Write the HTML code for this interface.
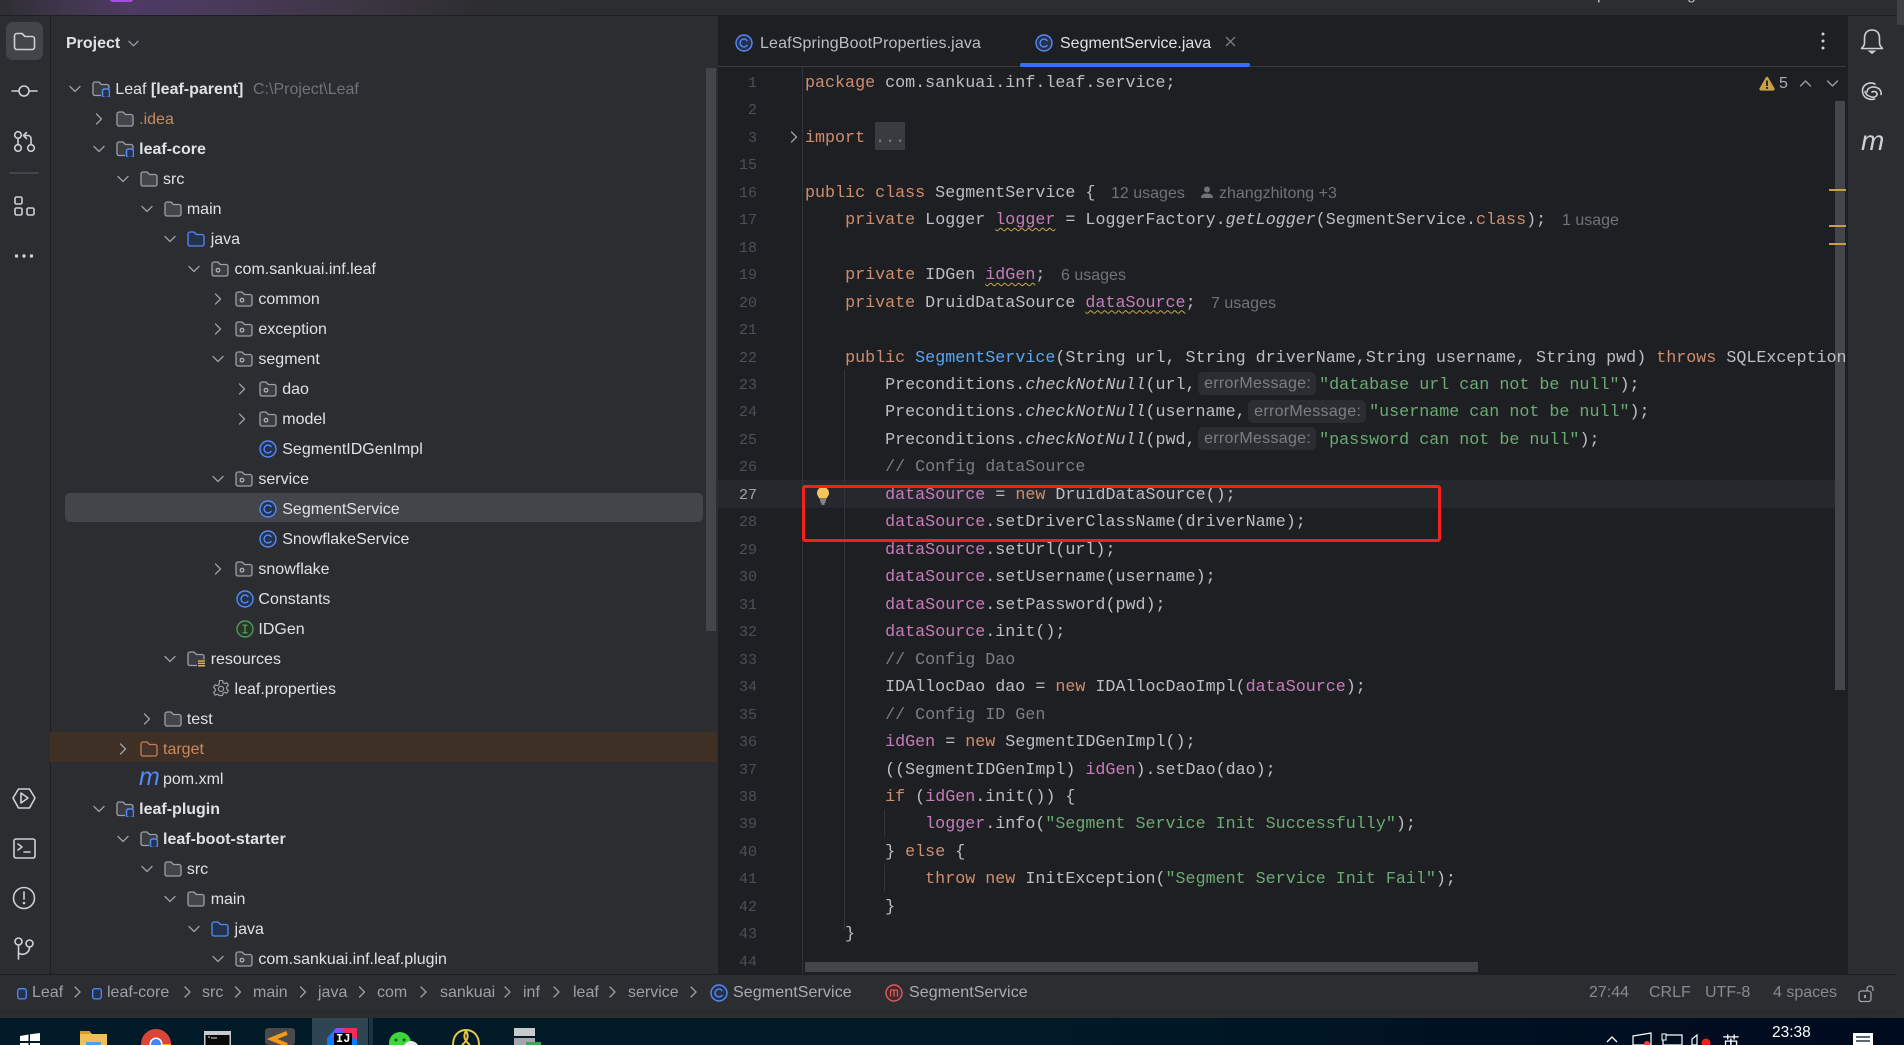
<!DOCTYPE html>
<html><head><meta charset="utf-8"><title>Leaf</title>
<style>
*{box-sizing:border-box}
html,body{margin:0;padding:0;width:1904px;height:1045px;overflow:hidden;background:#2b2d30}
body{position:relative;font-family:"Liberation Sans","Noto Sans CJK SC",sans-serif;font-size:16px;color:#dfe1e5}
.a{position:absolute}
svg{position:absolute;overflow:visible}
.r{position:absolute;left:0;right:0;height:30px;line-height:30px;top:calc(73.5px + 30px*var(--i));white-space:pre}
.r .ch{left:calc(69px + 23.85px*var(--n));top:9px;width:12px;height:12px}
.r .ic{left:calc(92px + 23.85px*var(--n));top:7px;width:18px;height:16px}
.r .ic.cl{top:6px;height:18px;left:calc(92.5px + 23.85px*var(--n))}
.r .t{position:absolute;left:calc(115.3px + 23.85px*var(--n));top:1px}
.g{fill:none;stroke:#9da0a8;stroke-width:1.3;stroke-linecap:round;stroke-linejoin:round}
.tb{fill:none;stroke:#ced0d6;stroke-width:1.6;stroke-linecap:round;stroke-linejoin:round}
.l{position:absolute;left:718px;width:1130px;height:27.45px;line-height:27.45px;top:calc(69.8px + 27.47px*var(--r));white-space:pre;font-family:"Liberation Mono",monospace;font-size:16.7px;color:#bcbec4;overflow:hidden}
.l .n{position:absolute;right:1091px;top:0;font-size:15px;color:#4b5059}
.l .c{position:absolute;left:87px;top:0}
.l .h{position:absolute;top:0;font-family:"Liberation Sans",sans-serif;font-size:16px;color:#6f737a}
k{color:#cf8e6d}f{color:#c77dbb}m{color:#56a8f5}s{color:#6aab73;text-decoration:none}em{font-style:italic}
c{color:#7a7e85}
u{color:#c77dbb;text-decoration:underline wavy #c9a54a 1px;text-underline-offset:3px}
.hb{display:inline-block;vertical-align:top;height:23px;line-height:24px;margin:.5px 3px 0 2.5px;width:118px;background:#2b2d30;border-radius:5px;font-family:"Liberation Sans",sans-serif;font-size:16px;color:#7a7e85;padding-left:6px;letter-spacing:.3px}
.cr{position:absolute;top:980px;line-height:26px;color:#9da0a8;white-space:pre}
.st{position:absolute;top:980px;line-height:26px;color:#868a91;white-space:pre}
</style></head><body>
<svg width="0" height="0" style="position:absolute">
<defs>
<symbol id="d" viewBox="0 0 12 12"><path class="g" d="M1 3.5 6 8.5 11 3.5"/></symbol>
<symbol id="rt" viewBox="0 0 12 12"><path class="g" d="M3.5 1 8.5 6 3.5 11"/></symbol>
<symbol id="fo" viewBox="0 0 18 16"><path d="M1 3a2 2 0 0 1 2-2h4l2.5 2.5H15a2 2 0 0 1 2 2V13a2 2 0 0 1-2 2H3a2 2 0 0 1-2-2z" fill="#43454a" stroke="#9da0a8" stroke-width="1.3"/></symbol>
<symbol id="pk" viewBox="0 0 18 16"><path d="M1 3a2 2 0 0 1 2-2h4l2.5 2.5H15a2 2 0 0 1 2 2V13a2 2 0 0 1-2 2H3a2 2 0 0 1-2-2z" fill="#3a3c40" stroke="#9da0a8" stroke-width="1.3"/><circle cx="7" cy="9.2" r="1.8" fill="none" stroke="#b4b8bf" stroke-width="1.2"/></symbol>
<symbol id="jf" viewBox="0 0 18 16"><path d="M1 3a2 2 0 0 1 2-2h4l2.5 2.5H15a2 2 0 0 1 2 2V13a2 2 0 0 1-2 2H3a2 2 0 0 1-2-2z" fill="#25324d" stroke="#548af7" stroke-width="1.3"/></symbol>
<symbol id="tg" viewBox="0 0 18 16"><path d="M1 3a2 2 0 0 1 2-2h4l2.5 2.5H15a2 2 0 0 1 2 2V13a2 2 0 0 1-2 2H3a2 2 0 0 1-2-2z" fill="#45322a" stroke="#c77d55" stroke-width="1.3"/></symbol>
<symbol id="mo" viewBox="0 0 18 16"><path d="M9 14.5H3a2 2 0 0 1-2-2V3a2 2 0 0 1 2-2h4l2.5 2.5H15a2 2 0 0 1 2 2v2" fill="#3a3c40" stroke="#9da0a8" stroke-width="1.3"/><rect x="10.5" y="8" width="7" height="8.5" rx="2" fill="#25324d" stroke="#548af7" stroke-width="1.5"/></symbol>
<symbol id="re" viewBox="0 0 18 16"><path d="M10 14.5H3a2 2 0 0 1-2-2V3a2 2 0 0 1 2-2h4l2.5 2.5H15a2 2 0 0 1 2 2v3" fill="#3a3c40" stroke="#9da0a8" stroke-width="1.3"/><path d="M11 10h8M11 12.4h8M11 14.8h8" stroke="#d6ae58" stroke-width="1.5"/></symbol>
<symbol id="cl" viewBox="0 0 18 18"><circle cx="9" cy="9" r="8" fill="#25324d" stroke="#548af7" stroke-width="1.4"/><path d="M12 6.6A3.9 3.9 0 1 0 12 11.4" fill="none" stroke="#548af7" stroke-width="1.4" stroke-linecap="round"/></symbol>
<symbol id="if" viewBox="0 0 18 18"><circle cx="9" cy="9" r="8" fill="#253627" stroke="#57965c" stroke-width="1.4"/><path d="M6.5 5.2h5M6.5 12.8h5M9 5.2v7.6" fill="none" stroke="#57965c" stroke-width="1.4"/></symbol>
<symbol id="gear" viewBox="0 0 18 18"><path d="M7.5 1h3l.5 2.3 1.7.9 2.2-.8 1.5 2.6-1.7 1.6v1.9l1.7 1.6-1.5 2.6-2.2-.8-1.7.9-.5 2.3h-3L7 15.8l-1.7-.9-2.2.8-1.5-2.6 1.7-1.6V9.6L1.6 8 3.1 5.4l2.2.8L7 5.3z" fill="none" stroke="#9da0a8" stroke-width="1.2" stroke-linejoin="round" transform="translate(0 -.6)"/><circle cx="9" cy="8.9" r="2.6" fill="none" stroke="#9da0a8" stroke-width="1.2"/></symbol>
</defs></svg>

<!-- title bar -->
<div class="a" style="left:0;top:0;width:1904px;height:16px;background:linear-gradient(90deg,#2e2e33 0,#41364f 70px,#4e3a63 130px,#4a3b5e 200px,#3e3645 340px,#2e2e32 470px,#2b2d30 600px);border-bottom:1.5px solid #1e1f22"></div>
<div class="a" style="left:110px;top:-3px;width:23px;height:5px;border-radius:3px;background:#a64fe0"></div>
<div class="a" style="left:1597px;top:-14px;color:#bcbec4">p</div><div class="a" style="left:1650px;top:-15px;color:#bcbec4">,</div><div class="a" style="left:1687px;top:-14px;color:#bcbec4">g</div>
<div class="a" style="left:1897px;top:0;width:7px;height:25px;background:#3f4144"></div>

<!-- left toolbar -->
<div class="a" style="left:50px;top:16px;width:1px;height:958px;background:#1e1f22"></div>
<div class="a" style="left:5.5px;top:22px;width:37.5px;height:38px;border-radius:7px;background:#43454a"></div>
<svg style="left:0;top:0" width="50" height="1045">
<path class="tb" d="M14.5 36a2.5 2.5 0 0 1 2.5-2.500h5l3 3h7a2.500 2.500 0 0 1 2.500 2.500v8a2.500 2.500 0 0 1-2.500 2.500H17a2.500 2.500 0 0 1-2.500-2.500z" stroke="#dfe1e5"/>
<path class="tb" d="M12 91h6.500M29.500 91H37"/><circle class="tb" cx="24" cy="91" r="5"/>
<circle class="tb" cx="18" cy="135" r="3.300"/><circle class="tb" cx="18" cy="148" r="3.300"/><circle class="tb" cx="31" cy="148" r="3.300"/>
<path class="tb" d="M18 138.500v6M31 144.500v-6a3 3 0 0 0-3-3h-4M26.500 132.500l-3 3 3 3"/>
<rect x="9" y="172" width="30" height="2" fill="#43454a"/>
<rect class="tb" x="15" y="197" width="7" height="7" rx="1.500"/><rect class="tb" x="15" y="208" width="7" height="7" rx="1.500"/><rect class="tb" x="27" y="208" width="7" height="7" rx="1.500"/>
<g fill="#ced0d6"><circle cx="16.500" cy="256" r="1.700"/><circle cx="24" cy="256" r="1.700"/><circle cx="31.500" cy="256" r="1.700"/></g>
<path class="tb" d="M18.500 789h11l5.500 9-5.500 10h-11l-5.500-10zM21 793l7 5-7 5z"/>
<rect class="tb" x="14" y="839" width="21" height="19" rx="2"/><path class="tb" d="M18 844l4 3-4 3M24 852h6"/>
<circle class="tb" cx="24" cy="898" r="10.500"/><path class="tb" d="M24 892v7" stroke-width="2"/><circle cx="24" cy="903" r="1.300" fill="#ced0d6"/>
<circle class="tb" cx="18.500" cy="941.500" r="3.500"/><circle class="tb" cx="29.500" cy="943.500" r="3.500"/><path class="tb" d="M18.500 945v14M29.500 947a7 7 0 0 1-11 6"/>
</svg>

<!-- project panel -->
<div class="a" style="left:66px;top:31px;line-height:26px;font-weight:bold;color:#dfe1e5">Project</div>
<svg style="left:128px;top:38px" width="11" height="11"><use href="#d" width="11" height="11"/></svg>
<div class="a" style="left:65px;top:493px;width:638px;height:29px;border-radius:5px;background:#43454a"></div>
<div class="a" style="left:50px;top:732px;width:667px;height:30px;background:#3f3026"></div>
<div class="a" style="left:706px;top:68px;width:10px;height:563px;background:#43454a"></div>

<div class="a" style="left:0;top:0;width:717px;height:974px;overflow:hidden">
<div class="r" style="--i:0;--n:0"><svg class="ch"><use href="#d" width="12" height="12"/></svg><svg class="ic"><use href="#mo" width="18" height="16"/></svg><span class="t">Leaf <b>[leaf-parent]</b></span><span class="a" style="left:253px;top:1px;color:#6f737a">C:\Project\Leaf</span></div>
<div class="r" style="--i:1;--n:1"><svg class="ch"><use href="#rt" width="12" height="12"/></svg><svg class="ic"><use href="#fo" width="18" height="16"/></svg><span class="t" style="color:#c98a5e">.idea</span></div>
<div class="r" style="--i:2;--n:1"><svg class="ch"><use href="#d" width="12" height="12"/></svg><svg class="ic"><use href="#mo" width="18" height="16"/></svg><span class="t"><b>leaf-core</b></span></div>
<div class="r" style="--i:3;--n:2"><svg class="ch"><use href="#d" width="12" height="12"/></svg><svg class="ic"><use href="#fo" width="18" height="16"/></svg><span class="t">src</span></div>
<div class="r" style="--i:4;--n:3"><svg class="ch"><use href="#d" width="12" height="12"/></svg><svg class="ic"><use href="#fo" width="18" height="16"/></svg><span class="t">main</span></div>
<div class="r" style="--i:5;--n:4"><svg class="ch"><use href="#d" width="12" height="12"/></svg><svg class="ic"><use href="#jf" width="18" height="16"/></svg><span class="t">java</span></div>
<div class="r" style="--i:6;--n:5"><svg class="ch"><use href="#d" width="12" height="12"/></svg><svg class="ic"><use href="#pk" width="18" height="16"/></svg><span class="t">com.sankuai.inf.leaf</span></div>
<div class="r" style="--i:7;--n:6"><svg class="ch"><use href="#rt" width="12" height="12"/></svg><svg class="ic"><use href="#pk" width="18" height="16"/></svg><span class="t">common</span></div>
<div class="r" style="--i:8;--n:6"><svg class="ch"><use href="#rt" width="12" height="12"/></svg><svg class="ic"><use href="#pk" width="18" height="16"/></svg><span class="t">exception</span></div>
<div class="r" style="--i:9;--n:6"><svg class="ch"><use href="#d" width="12" height="12"/></svg><svg class="ic"><use href="#pk" width="18" height="16"/></svg><span class="t">segment</span></div>
<div class="r" style="--i:10;--n:7"><svg class="ch"><use href="#rt" width="12" height="12"/></svg><svg class="ic"><use href="#pk" width="18" height="16"/></svg><span class="t">dao</span></div>
<div class="r" style="--i:11;--n:7"><svg class="ch"><use href="#rt" width="12" height="12"/></svg><svg class="ic"><use href="#pk" width="18" height="16"/></svg><span class="t">model</span></div>
<div class="r" style="--i:12;--n:7"><svg class="ic cl"><use href="#cl" width="18" height="18"/></svg><span class="t">SegmentIDGenImpl</span></div>
<div class="r" style="--i:13;--n:6"><svg class="ch"><use href="#d" width="12" height="12"/></svg><svg class="ic"><use href="#pk" width="18" height="16"/></svg><span class="t">service</span></div>
<div class="r" style="--i:14;--n:7"><svg class="ic cl"><use href="#cl" width="18" height="18"/></svg><span class="t">SegmentService</span></div>
<div class="r" style="--i:15;--n:7"><svg class="ic cl"><use href="#cl" width="18" height="18"/></svg><span class="t">SnowflakeService</span></div>
<div class="r" style="--i:16;--n:6"><svg class="ch"><use href="#rt" width="12" height="12"/></svg><svg class="ic"><use href="#pk" width="18" height="16"/></svg><span class="t">snowflake</span></div>
<div class="r" style="--i:17;--n:6"><svg class="ic cl"><use href="#cl" width="18" height="18"/></svg><span class="t">Constants</span></div>
<div class="r" style="--i:18;--n:6"><svg class="ic cl"><use href="#if" width="18" height="18"/></svg><span class="t">IDGen</span></div>
<div class="r" style="--i:19;--n:4"><svg class="ch"><use href="#d" width="12" height="12"/></svg><svg class="ic"><use href="#re" width="18" height="16"/></svg><span class="t">resources</span></div>
<div class="r" style="--i:20;--n:5"><svg class="ic cl"><use href="#gear" width="18" height="18"/></svg><span class="t">leaf.properties</span></div>
<div class="r" style="--i:21;--n:3"><svg class="ch"><use href="#rt" width="12" height="12"/></svg><svg class="ic"><use href="#fo" width="18" height="16"/></svg><span class="t">test</span></div>
<div class="r" style="--i:22;--n:2"><svg class="ch"><use href="#rt" width="12" height="12"/></svg><svg class="ic"><use href="#tg" width="18" height="16"/></svg><span class="t" style="color:#c98a5e">target</span></div>
<div class="r" style="--i:23;--n:2"><span class="a" style="left:139px;top:-2px;font-style:italic;font-size:25px;color:#548af7">m</span><span class="t">pom.xml</span></div>
<div class="r" style="--i:24;--n:1"><svg class="ch"><use href="#d" width="12" height="12"/></svg><svg class="ic"><use href="#mo" width="18" height="16"/></svg><span class="t"><b>leaf-plugin</b></span></div>
<div class="r" style="--i:25;--n:2"><svg class="ch"><use href="#d" width="12" height="12"/></svg><svg class="ic"><use href="#mo" width="18" height="16"/></svg><span class="t"><b>leaf-boot-starter</b></span></div>
<div class="r" style="--i:26;--n:3"><svg class="ch"><use href="#d" width="12" height="12"/></svg><svg class="ic"><use href="#fo" width="18" height="16"/></svg><span class="t">src</span></div>
<div class="r" style="--i:27;--n:4"><svg class="ch"><use href="#d" width="12" height="12"/></svg><svg class="ic"><use href="#fo" width="18" height="16"/></svg><span class="t">main</span></div>
<div class="r" style="--i:28;--n:5"><svg class="ch"><use href="#d" width="12" height="12"/></svg><svg class="ic"><use href="#jf" width="18" height="16"/></svg><span class="t">java</span></div>
<div class="r" style="--i:29;--n:6"><svg class="ch"><use href="#d" width="12" height="12"/></svg><svg class="ic"><use href="#pk" width="18" height="16"/></svg><span class="t">com.sankuai.inf.leaf.plugin</span></div>
</div>

<!-- editor -->
<div class="a" style="left:718px;top:16px;width:1130px;height:958px;background:#1e1f22"></div>
<div class="a" style="left:718px;top:66px;width:1128px;height:1px;background:#393b40"></div>
<svg style="left:735px;top:34px" width="18" height="18"><use href="#cl" width="18" height="18"/></svg>
<div class="a" style="left:760px;top:31px;line-height:26px;color:#bcbec4;letter-spacing:.14px">LeafSpringBootProperties.java</div>
<svg style="left:1035px;top:34px" width="18" height="18"><use href="#cl" width="18" height="18"/></svg>
<div class="a" style="left:1060px;top:31px;line-height:26px;color:#dfe1e5">SegmentService.java</div>
<svg style="left:1225px;top:36px" width="11" height="11"><path d="M1 1l9 9M10 1l-9 9" stroke="#7a7e85" stroke-width="1.300" fill="none"/></svg>
<div class="a" style="left:1020px;top:63px;width:230px;height:4px;border-radius:2px;background:#3574f0"></div>
<svg style="left:1818px;top:32px" width="10" height="20"><g fill="#ced0d6"><circle cx="5" cy="2" r="1.500"/><circle cx="5" cy="9" r="1.500"/><circle cx="5" cy="16" r="1.500"/></g></svg>

<!-- current line + guides -->
<div class="a" style="left:718px;top:480px;width:1117px;height:27.500px;background:#26282e"></div>
<div class="a" style="left:802px;top:67px;width:1px;height:907px;background:#313438"></div>
<div class="a" style="left:844px;top:370px;width:1px;height:560px;background:#313438"></div>
<div class="a" style="left:884px;top:810px;width:1px;height:27px;background:#313438"></div>
<div class="a" style="left:884px;top:865px;width:1px;height:27px;background:#313438"></div>
<div class="a" style="left:875px;top:122px;width:30px;height:28px;background:#393b40"></div>
<svg style="left:790px;top:131px" width="8" height="12"><path class="g" d="M1.500 1l5 5-5 5" stroke="#7a7e85"/></svg>
<div class="a" style="left:1835px;top:101px;width:10px;height:589px;background:#43454a"></div>

<div class="l" style="--r:0"><span class="n">1</span><span class="c"><k>package</k> com.sankuai.inf.leaf.service;</span></div>
<div class="l" style="--r:1"><span class="n">2</span></div>
<div class="l" style="--r:2"><span class="n">3</span><span class="c"><k>import</k> <c>...</c></span></div>
<div class="l" style="--r:3"><span class="n">15</span></div>
<div class="l" style="--r:4"><span class="n">16</span><span class="c"><k>public class</k> SegmentService {</span><span class="h" style="left:393px">12 usages</span><span class="h" style="left:501px">zhangzhitong +3</span></div>
<div class="l" style="--r:5"><span class="n">17</span><span class="c">    <k>private</k> Logger <u>logger</u> = LoggerFactory.<em>getLogger</em>(SegmentService.<k>class</k>);</span><span class="h" style="left:844px">1 usage</span></div>
<div class="l" style="--r:6"><span class="n">18</span></div>
<div class="l" style="--r:7"><span class="n">19</span><span class="c">    <k>private</k> IDGen <u>idGen</u>;</span><span class="h" style="left:343px">6 usages</span></div>
<div class="l" style="--r:8"><span class="n">20</span><span class="c">    <k>private</k> DruidDataSource <u>dataSource</u>;</span><span class="h" style="left:493px">7 usages</span></div>
<div class="l" style="--r:9"><span class="n">21</span></div>
<div class="l" style="--r:10"><span class="n">22</span><span class="c">    <k>public</k> <m>SegmentService</m>(String url, String driverName,String username, String pwd) <k>throws</k> SQLException</span></div>
<div class="l" style="--r:11"><span class="n">23</span><span class="c">        Preconditions.<em>checkNotNull</em>(url,<span class="hb">errorMessage:</span><s>"database url can not be null"</s>);</span></div>
<div class="l" style="--r:12"><span class="n">24</span><span class="c">        Preconditions.<em>checkNotNull</em>(username,<span class="hb">errorMessage:</span><s>"username can not be null"</s>);</span></div>
<div class="l" style="--r:13"><span class="n">25</span><span class="c">        Preconditions.<em>checkNotNull</em>(pwd,<span class="hb">errorMessage:</span><s>"password can not be null"</s>);</span></div>
<div class="l" style="--r:14"><span class="n">26</span><span class="c"><c>        // Config dataSource</c></span></div>
<div class="l" style="--r:15"><span class="n" style="color:#a1a3ab">27</span><span class="c">        <f>dataSource</f> = <k>new</k> DruidDataSource();</span></div>
<div class="l" style="--r:16"><span class="n">28</span><span class="c">        <f>dataSource</f>.setDriverClassName(driverName);</span></div>
<div class="l" style="--r:17"><span class="n">29</span><span class="c">        <f>dataSource</f>.setUrl(url);</span></div>
<div class="l" style="--r:18"><span class="n">30</span><span class="c">        <f>dataSource</f>.setUsername(username);</span></div>
<div class="l" style="--r:19"><span class="n">31</span><span class="c">        <f>dataSource</f>.setPassword(pwd);</span></div>
<div class="l" style="--r:20"><span class="n">32</span><span class="c">        <f>dataSource</f>.init();</span></div>
<div class="l" style="--r:21"><span class="n">33</span><span class="c"><c>        // Config Dao</c></span></div>
<div class="l" style="--r:22"><span class="n">34</span><span class="c">        IDAllocDao dao = <k>new</k> IDAllocDaoImpl(<f>dataSource</f>);</span></div>
<div class="l" style="--r:23"><span class="n">35</span><span class="c"><c>        // Config ID Gen</c></span></div>
<div class="l" style="--r:24"><span class="n">36</span><span class="c">        <f>idGen</f> = <k>new</k> SegmentIDGenImpl();</span></div>
<div class="l" style="--r:25"><span class="n">37</span><span class="c">        ((SegmentIDGenImpl) <f>idGen</f>).setDao(dao);</span></div>
<div class="l" style="--r:26"><span class="n">38</span><span class="c">        <k>if</k> (<f>idGen</f>.init()) {</span></div>
<div class="l" style="--r:27"><span class="n">39</span><span class="c">            <f>logger</f>.info(<s>"Segment Service Init Successfully"</s>);</span></div>
<div class="l" style="--r:28"><span class="n">40</span><span class="c">        } <k>else</k> {</span></div>
<div class="l" style="--r:29"><span class="n">41</span><span class="c">            <k>throw new</k> InitException(<s>"Segment Service Init Fail"</s>);</span></div>
<div class="l" style="--r:30"><span class="n">42</span><span class="c">        }</span></div>
<div class="l" style="--r:31"><span class="n">43</span><span class="c">    }</span></div>
<div class="l" style="--r:32"><span class="n">44</span></div>

<svg style="left:1201px;top:186px" width="12" height="13"><circle cx="6" cy="3.500" r="3" fill="#6f737a"/><path d="M0 12c0-3.500 2.500-4.500 6-4.500s6 1 6 4.500z" fill="#6f737a"/></svg>
<svg style="left:816px;top:487px" width="14" height="18"><path d="M7 0a6 6 0 0 0-6 6c0 2.500 1.500 3.500 2.300 5.500h7.400C11.500 9.500 13 8.500 13 6a6 6 0 0 0-6-6z" fill="#f2c55c"/><path d="M4 13h6M4.500 15h5M5.500 17h3" stroke="#bcbec4" stroke-width="1.200"/></svg>
<div class="a" style="left:802px;top:484.500px;width:639px;height:57px;border:3.500px solid #f5201a;border-radius:3px"></div>

<!-- inspection + scroll -->
<svg style="left:1759px;top:76px" width="16" height="15"><path d="M8 .800a1.500 1.500 0 0 1 1.300.8l6.200 10.800a1.500 1.500 0 0 1-1.300 2.200H1.800a1.500 1.500 0 0 1-1.300-2.200L6.700 1.600A1.500 1.500 0 0 1 8 .800z" fill="#c9a044"/><rect x="7.100" y="4.500" width="1.800" height="5.500" fill="#1e1f22"/><rect x="7.100" y="11" width="1.800" height="1.900" fill="#1e1f22"/></svg>
<div class="a" style="left:1779px;top:71px;line-height:26px;color:#a8adb5">5</div>
<svg style="left:1800px;top:80px" width="11" height="7"><path class="g" d="M.500 6 5.500 1l5 5"/></svg>
<svg style="left:1827px;top:80px" width="11" height="7"><path class="g" d="M.500 1l5 5 5-5"/></svg>
<div class="a" style="left:1829px;top:189px;width:17px;height:2px;background:#c9a044"></div>
<div class="a" style="left:1829px;top:225px;width:17px;height:2px;background:#c9a044"></div>
<div class="a" style="left:1829px;top:243px;width:17px;height:2px;background:#c9a044"></div>
<div class="a" style="left:805px;top:962px;width:673px;height:10px;background:#43454a"></div>

<!-- right toolbar -->
<svg style="left:1848px;top:15px" width="50" height="150">
<path class="tb" d="M24 15c-5 0-7.500 3.500-7.500 8v5c0 2-1.500 4-3 5.500h21c-1.500-1.500-3-3.500-3-5.500v-5c0-4.500-2.500-8-7.500-8z"/><path d="M21 36h6l-3 2.500z" fill="#ced0d6" stroke="#ced0d6"/>
<path class="tb" d="M27 69c-6-3-13 1-12.500 7.500.4 6 6.500 9 12 7.500M19 77c0-4 5-6 9.500-4.500 3.500 1.200 5 4 4.500 7M24 77c2-1 4.500-.5 5 1.500s-2 4.500-5.500 3.500-6-3-6.500-5.500"/>
</svg>
<div class="a" style="left:1861px;top:123px;font-style:italic;font-size:28px;line-height:36px;color:#ced0d6">m</div>

<!-- status bar -->
<div class="a" style="left:0;top:974px;width:1897px;height:1px;background:#1e1f22"></div>
<div class="a" style="left:0;top:1011px;width:1897px;height:1px;background:#26282b"></div>
<svg style="left:17px;top:988px" width="90" height="11"><rect x=".700" y=".700" width="8.600" height="10.200" rx="2.200" fill="#25324d" stroke="#548af7" stroke-width="1.300"/><rect x="75.700" y=".700" width="8.600" height="10.200" rx="2.200" fill="#25324d" stroke="#548af7" stroke-width="1.300"/></svg>
<div class="cr" style="left:32px">Leaf</div>
<div class="cr" style="left:107px">leaf-core</div>
<div class="cr" style="left:202px">src</div>
<div class="cr" style="left:253px">main</div>
<div class="cr" style="left:318px">java</div>
<div class="cr" style="left:377px">com</div>
<div class="cr" style="left:440px">sankuai</div>
<div class="cr" style="left:523px">inf</div>
<div class="cr" style="left:573px">leaf</div>
<div class="cr" style="left:628px">service</div>
<svg style="left:0;top:986px" width="720" height="14"><g class="g" stroke="#868a91"><path d="M75 1l5 5-5 5M185 1l5 5-5 5M235.500 1l5 5-5 5M300.500 1l5 5-5 5M359.500 1l5 5-5 5M421 1l5 5-5 5M505 1l5 5-5 5M554 1l5 5-5 5M610 1l5 5-5 5M691 1l5 5-5 5"/></g></svg>
<svg style="left:710px;top:984px" width="18" height="18"><use href="#cl" width="18" height="18"/></svg>
<div class="cr" style="left:733px;color:#a8adb5;letter-spacing:.1px">SegmentService</div>
<svg style="left:885px;top:984px" width="18" height="18"><circle cx="9" cy="9" r="8" fill="#45282b" stroke="#db5c5c" stroke-width="1.400"/><path d="M5.500 12.500V7c0-1.500 3.500-1.500 3.500 0v5.500M9 7c0-1.500 3.500-1.500 3.500 0v5.500" fill="none" stroke="#db5c5c" stroke-width="1.300"/></svg>
<div class="cr" style="left:909px;color:#a8adb5;letter-spacing:.1px">SegmentService</div>
<div class="st" style="left:1589px">27:44</div>
<div class="st" style="left:1649px">CRLF</div>
<div class="st" style="left:1705px">UTF-8</div>
<div class="st" style="left:1773px">4 spaces</div>
<svg style="left:1858px;top:985px" width="18" height="18"><rect x="1" y="6" width="12" height="10.500" rx="2.500" fill="none" stroke="#9da0a8" stroke-width="1.300"/><rect x="6" y="10" width="2" height="3" fill="#9da0a8"/><path d="M9 6V4a3 3 0 0 1 6 0v2" fill="none" stroke="#9da0a8" stroke-width="1.300"/></svg>

<!-- taskbar -->
<div class="a" style="left:0;top:1018px;width:1904px;height:27px;background:linear-gradient(90deg,#001b27 0,#001a26 55%,#000d20 90%,#000a1e 100%)"></div>
<div class="a" style="left:312px;top:1018px;width:56px;height:27px;background:#2f4652"></div>
<div class="a" style="left:369px;top:1018px;width:4px;height:27px;background:#1a3340"></div>
<svg style="left:0;top:1018px" width="1904" height="27">
<path d="M20 18l8.500-1.500V23H20zM30 16.200 40 15v8H30zM20 25h8.500v2H20zM30 25h10v2H30z" fill="#fff"/>
<path d="M80 15a2 2 0 0 1 2-2h7l3 3h15v11H80z" fill="#f0c052"/><rect x="80" y="13" width="10" height="3" fill="#d99a1f"/><rect x="86" y="24" width="15" height="3" fill="#4aa3e8"/>
<circle cx="156" cy="26" r="15" fill="#db4437"/><path d="M156 26 142 30a15 15 0 0 0 14 11z" fill="#34a853"/><path d="M156 26h15a15 15 0 0 1-9 14z" fill="#f4b400"/><circle cx="156" cy="26" r="6.500" fill="#fff"/><circle cx="156" cy="26" r="5" fill="#4285f4"/>
<rect x="204" y="13" width="27" height="14" fill="#c8cacd"/><rect x="205.500" y="17" width="24" height="10" fill="#0a0a0a"/><path d="M208 19h2M211 20h6" stroke="#ddd" stroke-width="1"/>
<rect x="265" y="10" width="30" height="17" rx="3" fill="#4a4a4a"/><path d="M287 15l-15 6 15 6" fill="none" stroke="#f39a1e" stroke-width="4"/>
<path d="M327 20l9-10h21v17h-30z" fill="#087cfa"/><path d="M336 10h21v12z" fill="#fe2857"/><path d="M336 10h9l-15 12z" fill="#7f52ff"/><rect x="334" y="15" width="18" height="12" fill="#000"/>
<circle cx="400" cy="25" r="11" fill="#3dd63d"/><circle cx="396" cy="22" r="1.500" fill="#14571a"/><circle cx="404" cy="22" r="1.500" fill="#14571a"/><circle cx="411" cy="31" r="8" fill="#e8e8e8"/>
<path d="M466 12c-8 0-13 6-13 15M466 12c8 0 13 6 13 15M466 13c-3 5-2 9 4 14M466 13c3 5 2 9-4 14" fill="none" stroke="#e8c44a" stroke-width="2"/>
<rect x="514" y="10" width="21" height="8" fill="#c8cacd"/><rect x="514" y="20" width="21" height="7" fill="#a5a7aa"/><rect x="526" y="24" width="15" height="3" fill="#3fa355"/>
<path d="M1607 24l5-5 5 5" fill="none" stroke="#fff" stroke-width="1.300"/>
<path d="M1633 18l18-3v12h-18z" fill="none" stroke="#fff" stroke-width="1.200"/><circle cx="1647" cy="26" r="3" fill="#f04040"/>
<path d="M1663 17h19v10h-19z" fill="none" stroke="#fff" stroke-width="1.200"/><rect x="1662" y="16" width="4" height="6" fill="#001a26" stroke="#fff"/>
<path d="M1692 27v-6l5-4v10z" fill="none" stroke="#fff" stroke-width="1.200"/><circle cx="1706" cy="25" r="4.500" fill="#f02020"/>
<rect x="1853" y="15" width="20" height="12" fill="#fff"/><path d="M1856 19h14M1856 23h14" stroke="#000c20" stroke-width="1.300"/>
</svg>
<div class="a" style="left:336px;top:1033px;width:16px;font:bold 12px/12px 'Liberation Mono',monospace;color:#fff;overflow:hidden;height:12px">IJ</div>
<div class="a" style="left:1722px;top:1031px;font-size:18px;line-height:24px;color:#fff;font-family:'Noto Sans CJK SC',sans-serif;height:14px;overflow:hidden">英</div>
<div class="a" style="left:1772px;top:1022px;font-size:15.500px;line-height:22px;color:#fff">23:38</div>
</body></html>
